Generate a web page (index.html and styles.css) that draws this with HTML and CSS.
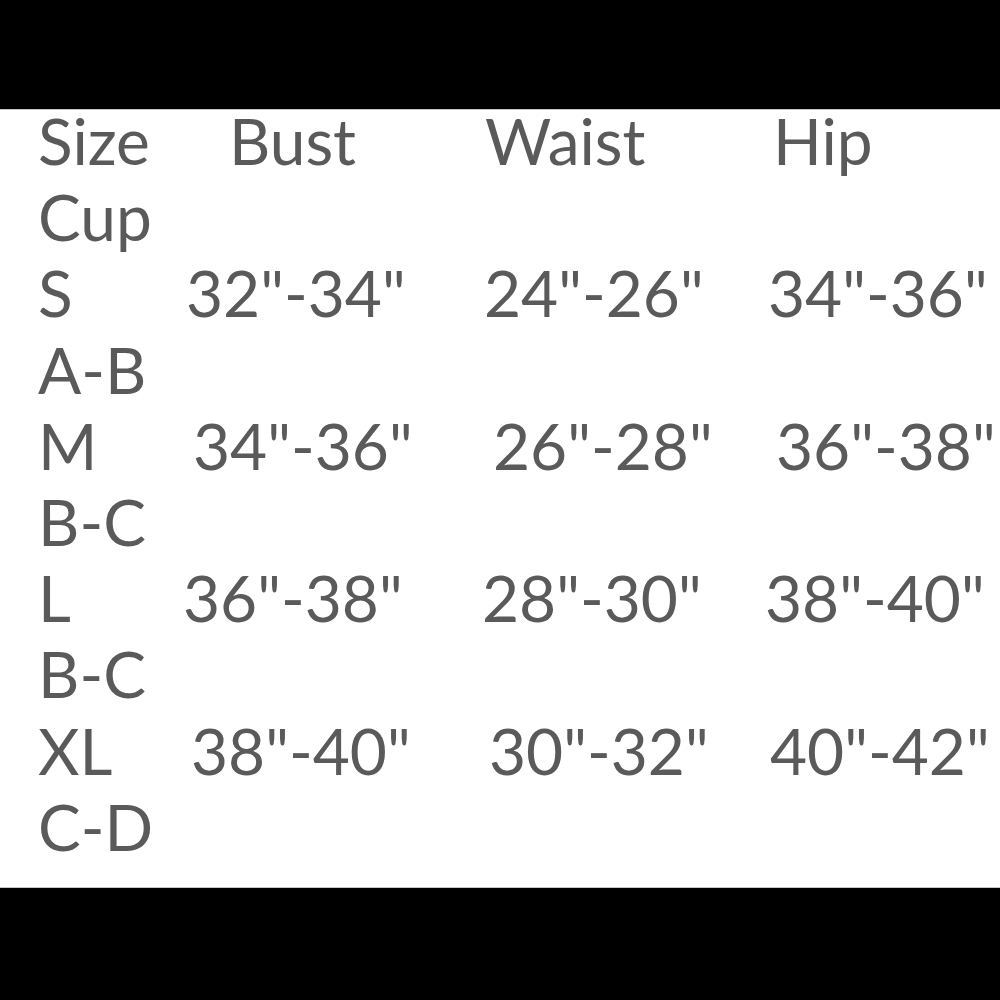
FILE: index.html
```html
<!DOCTYPE html>
<html>
<head>
<meta charset="utf-8">
<link rel="stylesheet" href="styles.css">
</head>
<body>
<div class="bar bar-top"></div>
<main class="sheet">
  <div class="chart">
    <div class="row"><span>Size</span><span class="o48">Bust</span><span class="o5">Waist</span><span class="o9">Hip</span></div>
    <div class="row"><span>Cup</span></div>
    <div class="row"><span>S</span><span class="o5">32"-34"</span><span class="o4">24"-26"</span><span class="o4">34"-36"</span></div>
    <div class="row"><span>A-B</span></div>
    <div class="row"><span>M</span><span class="o12">34"-36"</span><span class="o13">26"-28"</span><span class="o12">36"-38"</span></div>
    <div class="row"><span>B-C</span></div>
    <div class="row"><span>L</span><span class="o2">36"-38"</span><span class="o2">28"-30"</span><span class="o1">38"-40"</span></div>
    <div class="row"><span>B-C</span></div>
    <div class="row"><span>XL</span><span class="o10">38"-40"</span><span class="o9">30"-32"</span><span class="o6">40"-42"</span></div>
    <div class="row"><span>C-D</span></div>
  </div>
</main>
<div class="bar bar-bottom"></div>
</body>
</html>
```

FILE: styles.css
```css
html, body {
  margin: 0;
  padding: 0;
  background: #000;
}
body {
  width: 1000px;
  height: 1000px;
  display: flex;
  flex-direction: column;
  overflow: hidden;
}
.bar-top {
  height: 109px;
  flex: none;
}
.bar-bottom {
  flex: 1;
}
.sheet {
  height: 779px;
  flex: none;
  background: #fff;
  border-top: 1px solid #c4c4c4;
  border-bottom: 1px solid #c4c4c4;
  box-sizing: border-box;
}
.chart {
  padding-left: 38px;
  font-family: Lato, "Open Sans", sans-serif;
  font-size: 64px;
  line-height: 62px;
  color: #5a5a5a;
  white-space: nowrap;
}
.row {
  display: grid;
  grid-template-columns: 143px 299px 284px auto;
  height: 76.2px;
}
.o1 { margin-left: 1px; }
.o2 { margin-left: 2px; }
.o4 { margin-left: 4px; }
.o5 { margin-left: 5px; }
.o6 { margin-left: 6px; }
.o9 { margin-left: 9px; }
.o10 { margin-left: 10px; }
.o12 { margin-left: 12px; }
.o13 { margin-left: 13px; }
.o48 { margin-left: 48px; }
```
